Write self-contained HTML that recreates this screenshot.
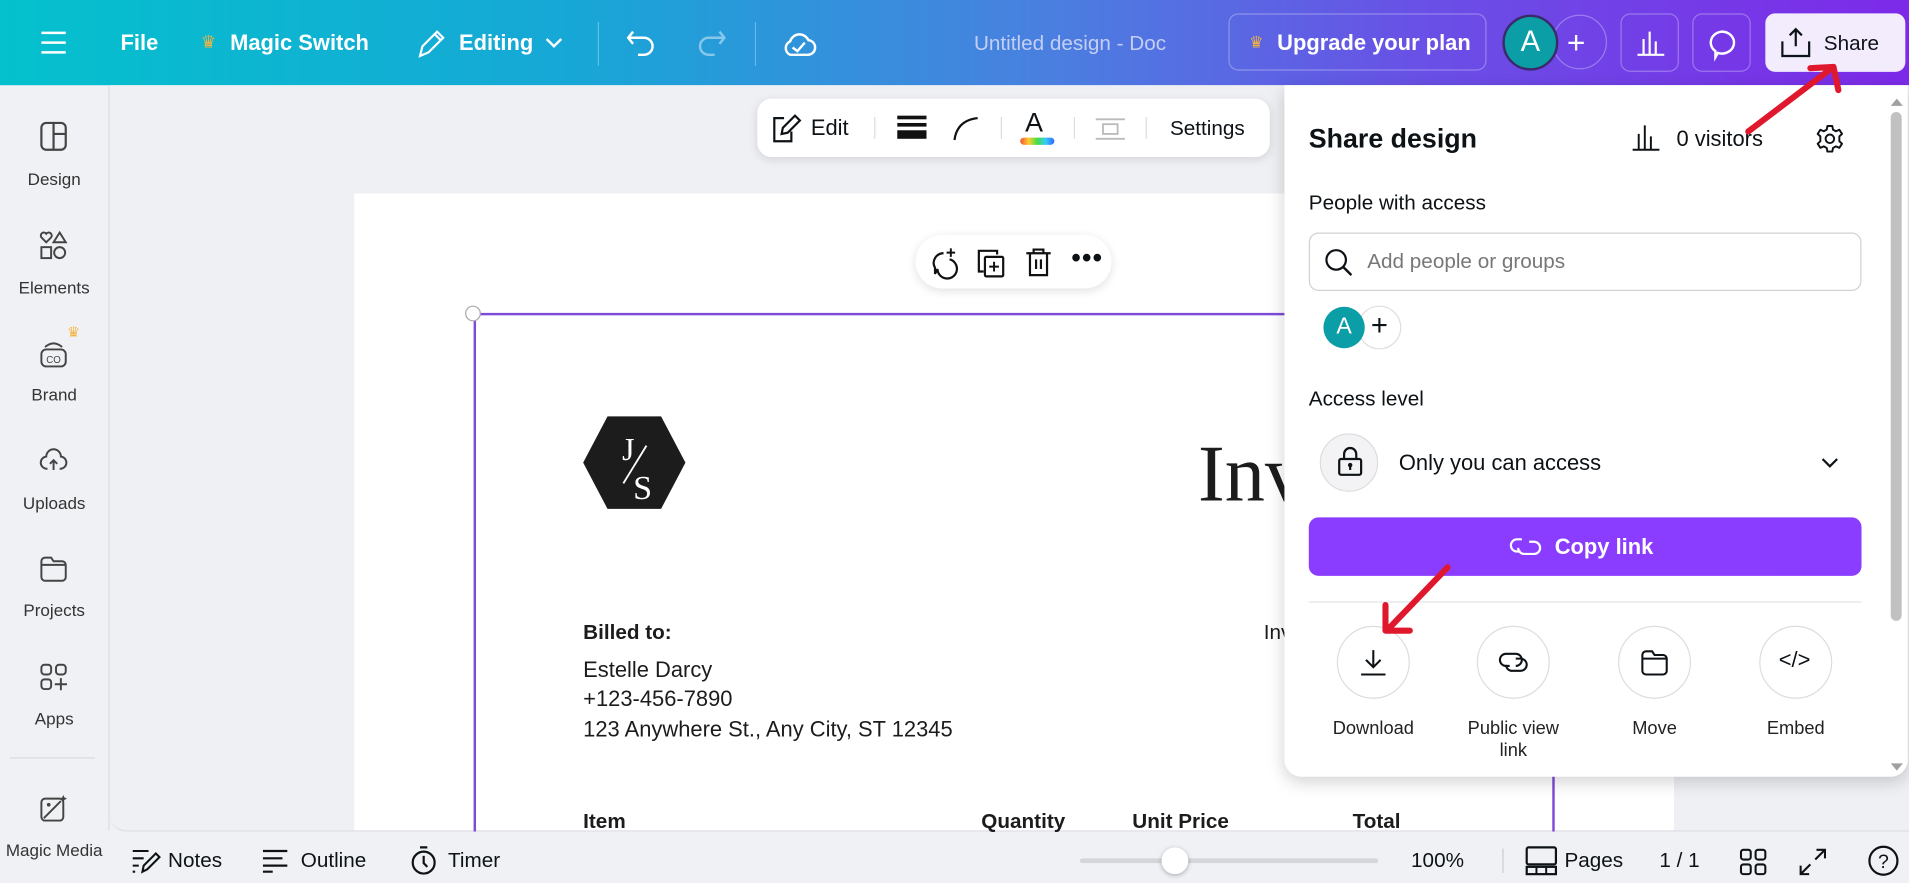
<!DOCTYPE html>
<html><head><meta charset="utf-8"><style>
html,body{margin:0;padding:0;width:1909px;height:883px;overflow:hidden;background:#f0f1f5}
#w{position:absolute;left:0;top:0;width:1568px;height:725px;transform:scale(1.21747);transform-origin:0 0;font-family:"Liberation Sans",sans-serif;color:#0d1216}
.a{position:absolute}
.t{position:absolute;white-space:nowrap}
svg{position:absolute;overflow:visible}
.top{left:0;top:0;width:1568px;height:70px;background:linear-gradient(90deg,#04c1cd 0%,#17a7d6 30%,#4a7fe0 55%,#6a4fe6 75%,#7d2ae8 100%)}
.wt{color:#fff;font-weight:bold;font-size:18px;top:25px}
.sb .t{font-size:14px;color:#333;width:89px;text-align:center;left:0}
.bb{font-size:17px;top:697px;color:#0d1216}
.lbl{font-size:15px;color:#222;text-align:center;width:110px}
</style></head><body><div id="w">
<!-- top bar -->
<div class="a top"></div>
<svg style="left:34px;top:25px" width="20" height="20"><path d="M0 2H20M0 10H20M0 18H20" stroke="#fff" stroke-width="2"/></svg>
<div class="t wt" style="left:99px">File</div>
<div class="t" style="left:165px;top:26px;color:#f5b33e;font-size:14px">♛</div>
<div class="t wt" style="left:189px">Magic Switch</div>
<svg style="left:342px;top:24px" width="24" height="24"><path d="M3 22L5 14L17 2L22 7L10 19Z M15 4L20 9" stroke="#fff" stroke-width="1.8" fill="none"/></svg>
<div class="t wt" style="left:377px">Editing</div>
<svg style="left:448px;top:31px" width="14" height="10"><path d="M1 1L7 7L13 1" stroke="#fff" stroke-width="2" fill="none"/></svg>
<div class="a" style="left:491px;top:18px;width:1px;height:36px;background:rgba(255,255,255,.3)"></div>
<svg style="left:514px;top:24px" width="26" height="24"><path d="M6 2L2 7L6 12M2 7H15A7 7 0 0 1 15 21H10" stroke="#fff" stroke-width="2" fill="none"/></svg>
<svg style="left:571px;top:24px" width="26" height="24"><path d="M20 2L24 7L20 12M24 7H11A7 7 0 0 0 11 21H16" stroke="rgba(255,255,255,.45)" stroke-width="2" fill="none"/></svg>
<div class="a" style="left:620px;top:18px;width:1px;height:36px;background:rgba(255,255,255,.3)"></div>
<svg style="left:642px;top:23px" width="28" height="26"><path d="M7 22A6 6 0 0 1 7 11A8 8 0 0 1 22 10A6 6 0 0 1 21 22Z M9 16L13 19L19 12" stroke="#fff" stroke-width="2" fill="none"/></svg>
<div class="t" style="left:800px;top:26px;font-size:17px;color:#c4cff5">Untitled design - Doc</div>
<div class="a" style="left:1009px;top:11px;width:212px;height:47px;border:1px solid rgba(255,255,255,.3);border-radius:8px;box-sizing:border-box"></div>
<div class="t" style="left:1026px;top:27px;color:#f5b33e;font-size:13px">♛</div>
<div class="t wt" style="left:1049px">Upgrade your plan</div>
<div class="a" style="left:1275px;top:12px;width:45px;height:45px;border:1px solid rgba(255,255,255,.3);border-radius:50%;box-sizing:border-box"></div>
<div class="t" style="left:1287px;top:20px;color:#fff;font-size:26px">+</div>
<div class="a" style="left:1234px;top:12px;width:46px;height:46px;border:2px solid #3a2a6a;background:#0b9ea7;border-radius:50%;box-sizing:border-box;color:#fff;font-size:24px;text-align:center;line-height:42px">A</div>
<div class="a" style="left:1331px;top:11px;width:48px;height:48px;border:1px solid rgba(255,255,255,.3);border-radius:8px;box-sizing:border-box"></div>
<svg style="left:1344px;top:24px" width="24" height="22"><path d="M1 21H23M6 21V8M11 21V2M16 21V10" stroke="#fff" stroke-width="1.8" fill="none"/></svg>
<div class="a" style="left:1390px;top:11px;width:48px;height:48px;border:1px solid rgba(255,255,255,.3);border-radius:8px;box-sizing:border-box"></div>
<svg style="left:1402px;top:24px" width="24" height="24"><path d="M12 2A10 9 0 1 1 9 19.5L7 23L7 18A10 9 0 0 1 12 2Z" stroke="#fff" stroke-width="2" fill="none"/></svg>
<div class="a" style="left:1450px;top:11px;width:115px;height:48px;background:#f2ecfd;border-radius:8px"></div>
<svg style="left:1462px;top:22px" width="26" height="26"><path d="M13 16V2M8 7L13 2L18 7M2 12V24H24V12" stroke="#0d1216" stroke-width="1.8" fill="none"/></svg>
<div class="t" style="left:1498px;top:26px;font-size:17px;color:#0d1216">Share</div>

<!-- sidebar -->
<div class="a" style="left:89px;top:70px;width:1px;height:612px;background:#dcdde2"></div>
<div class="sb">
<svg style="left:33px;top:100px" width="22" height="24"><rect x="1" y="1" width="20" height="22" rx="4" stroke="#444" stroke-width="1.8" fill="none"/><path d="M11 1V23M11 10H21" stroke="#444" stroke-width="1.8"/></svg>
<div class="t" style="top:139px">Design</div>
<svg style="left:33px;top:190px" width="22" height="24"><path d="M5 9L1 5A2.5 2.5 0 0 1 5 2A2.5 2.5 0 0 1 9 5Z M16 1L21 9H11Z" stroke="#444" stroke-width="1.6" fill="none"/><rect x="1" y="13" width="8" height="9" stroke="#444" stroke-width="1.6" fill="none"/><circle cx="16" cy="17.5" r="4.5" stroke="#444" stroke-width="1.6" fill="none"/></svg>
<div class="t" style="top:228px">Elements</div>
<svg style="left:33px;top:280px" width="22" height="22"><rect x="1" y="7" width="20" height="14" rx="4" stroke="#444" stroke-width="1.6" fill="none"/><path d="M4 5Q11 -1 18 5" stroke="#444" stroke-width="1.6" fill="none"/><text x="11" y="18" font-size="8" text-anchor="middle" fill="#444" font-family="Liberation Sans">CO</text></svg>
<div class="t" style="left:55px!important;top:266px;color:#f5b33e;font-size:12px;width:auto">♛</div>
<div class="t" style="top:316px">Brand</div>
<svg style="left:32px;top:366px" width="24" height="22"><path d="M7 19A5 5 0 0 1 6 9A6 6 0 0 1 18 9A5 5 0 0 1 17 19M12 20V12M9 15L12 12L15 15" stroke="#444" stroke-width="1.6" fill="none"/></svg>
<div class="t" style="top:405px">Uploads</div>
<svg style="left:33px;top:456px" width="22" height="22"><path d="M1 5A3 3 0 0 1 4 2H9L11 5H18A3 3 0 0 1 21 8V18A3 3 0 0 1 18 21H4A3 3 0 0 1 1 18Z M1 8H21" stroke="#444" stroke-width="1.6" fill="none"/></svg>
<div class="t" style="top:493px">Projects</div>
<svg style="left:33px;top:545px" width="22" height="22"><rect x="1" y="1" width="8" height="8" rx="2.5" stroke="#444" stroke-width="1.6" fill="none"/><rect x="13" y="1" width="8" height="8" rx="2.5" stroke="#444" stroke-width="1.6" fill="none"/><rect x="1" y="13" width="8" height="8" rx="2.5" stroke="#444" stroke-width="1.6" fill="none"/><path d="M17 12V22M12 17H22" stroke="#444" stroke-width="1.6"/></svg>
<div class="t" style="top:582px">Apps</div>
<div class="a" style="left:8px;top:622px;width:70px;height:1px;background:#d8d9de"></div>
<svg style="left:33px;top:653px" width="22" height="22"><rect x="1" y="3" width="18" height="18" rx="3" stroke="#444" stroke-width="1.6" fill="none"/><path d="M3 19L17 5" stroke="#444" stroke-width="1.6"/><circle cx="7" cy="8" r="1.5" fill="#444"/><path d="M19 0L20 2L22 3L20 4L19 6L18 4L16 3L18 2Z" fill="#444"/></svg>
<div class="t" style="top:690px">Magic Media</div>
</div>

<!-- canvas -->
<div class="a" style="left:90px;top:70px;width:1478px;height:612px;background:#eef0f4;border-bottom-left-radius:14px;border-bottom:1px solid #dcdde2"></div>
<div class="a" style="left:291px;top:159px;width:1084px;height:523px;background:#fff"></div>
<!-- selection -->
<div class="a" style="left:389px;top:257px;width:888px;height:426px;border:2px solid #8b3dff;border-bottom:none;box-sizing:border-box;border-color:#7d4bd8"></div>
<div class="a" style="left:382px;top:251px;width:13px;height:13px;border-radius:50%;background:#fff;border:1px solid #aaa;box-sizing:border-box"></div>
<!-- floating toolbar -->
<div class="a" style="left:622px;top:81px;width:421px;height:48px;background:#fff;border-radius:12px;box-shadow:0 2px 8px rgba(0,0,0,.12)"></div>
<svg style="left:634px;top:93px" width="26" height="24"><path d="M10 4H2V23H16V15 M8 17L9 12L19 2L23 6L13 16Z" stroke="#0d1216" stroke-width="1.8" fill="none"/></svg>
<div class="t" style="left:666px;top:95px;font-size:18px">Edit</div>
<div class="a" style="left:718px;top:96px;width:1px;height:18px;background:#ddd"></div>
<div class="a" style="left:737px;top:95px;width:24px;height:3px;background:#111"></div>
<div class="a" style="left:737px;top:101px;width:24px;height:3px;background:#111"></div>
<div class="a" style="left:737px;top:107px;width:24px;height:7px;background:#111"></div>
<svg style="left:783px;top:95px" width="22" height="20"><path d="M1 20Q3 4 20 2" stroke="#111" stroke-width="1.8" fill="none"/></svg>
<div class="a" style="left:822px;top:96px;width:1px;height:18px;background:#ddd"></div>
<div class="t" style="left:842px;top:88px;font-size:22px">A</div>
<div class="a" style="left:838px;top:113px;width:28px;height:6px;border-radius:3px;background:linear-gradient(90deg,#e53,#fc3,#4d4,#3cf,#36f)"></div>
<div class="a" style="left:882px;top:96px;width:1px;height:18px;background:#ddd"></div>
<svg style="left:900px;top:97px" width="24" height="18"><path d="M0 1H24M0 17H24" stroke="#bbb" stroke-width="1.5"/><rect x="6" y="5" width="12" height="8" stroke="#bbb" stroke-width="1.5" fill="none"/></svg>
<div class="a" style="left:941px;top:96px;width:1px;height:18px;background:#ddd"></div>
<div class="t" style="left:961px;top:96px;font-size:17px">Settings</div>
<!-- mini toolbar -->
<div class="a" style="left:752px;top:193px;width:161px;height:44px;background:#fff;border-radius:22px;box-shadow:0 2px 8px rgba(0,0,0,.12)"></div>
<svg style="left:762px;top:203px" width="24" height="26"><path d="M18 10A8 8 0 1 1 8 18L6 22L6 17A8 8 0 0 1 13 5" stroke="#111" stroke-width="1.8" fill="none"/><path d="M19 1V8M15.5 4.5H22.5" stroke="#111" stroke-width="1.6"/></svg>
<svg style="left:802px;top:204px" width="24" height="24"><path d="M6 19H2V2H17V5" stroke="#111" stroke-width="1.8" fill="none"/><rect x="7" y="7" width="15" height="16" rx="1" stroke="#111" stroke-width="1.8" fill="none"/><path d="M14.5 11V19M10.5 15H18.5" stroke="#111" stroke-width="1.6"/></svg>
<svg style="left:842px;top:203px" width="22" height="24"><path d="M1 5H21M7 5V2H15V5M4 5V23H18V5M9 10V18M13 10V18" stroke="#111" stroke-width="1.8" fill="none"/></svg>
<div class="t" style="left:880px;top:199px;font-size:22px;font-weight:bold;letter-spacing:1px">•••</div>

<!-- document -->
<svg style="left:479px;top:342px" width="84" height="76"><path d="M20 0H64L84 38L64 76H20L0 38Z" fill="#1c1c1c" stroke-linejoin="round"/><text x="32" y="36" fill="#fff" font-family="Liberation Serif" font-size="26">J</text><path d="M33 55L52 24" stroke="#fff" stroke-width="1.5"/><text x="41" y="68" fill="#fff" font-family="Liberation Serif" font-size="28">S</text></svg>
<div class="t" style="left:984px;top:352px;font-family:'Liberation Serif',serif;font-size:66px;color:#1c1c1c">Inv</div>
<div class="t" style="left:479px;top:510px;font-size:17px;font-weight:bold;color:#1c1c1c">Billed to:</div>
<div class="t" style="left:479px;top:540px;font-size:18px;color:#1c1c1c">Estelle Darcy</div>
<div class="t" style="left:479px;top:564px;font-size:18px;color:#1c1c1c">+123-456-7890</div>
<div class="t" style="left:479px;top:589px;font-size:18px;color:#1c1c1c">123 Anywhere St., Any City, ST 12345</div>
<div class="t" style="left:1038px;top:510px;font-size:17px;color:#1c1c1c">Inv</div>
<div class="t" style="left:479px;top:665px;font-size:17px;font-weight:bold;color:#1c1c1c">Item</div>
<div class="t" style="left:806px;top:665px;font-size:17px;font-weight:bold;color:#1c1c1c">Quantity</div>
<div class="t" style="left:930px;top:665px;font-size:17px;font-weight:bold;color:#1c1c1c">Unit Price</div>
<div class="t" style="left:1111px;top:665px;font-size:17px;font-weight:bold;color:#1c1c1c">Total</div>

<!-- share panel -->
<div class="a" style="left:1055px;top:70px;width:512px;height:568px;background:#fff;border-radius:0 0 14px 14px;box-shadow:0 4px 14px rgba(0,0,0,.18)"></div>
<div class="a" style="left:1553px;top:92px;width:9px;height:418px;background:#c1c1c1;border-radius:5px"></div>
<svg style="left:1552px;top:80px" width="12" height="8"><path d="M1 7L6 1L11 7Z" fill="#a0a0a0"/></svg>
<svg style="left:1552px;top:626px" width="12" height="8"><path d="M1 1L6 7L11 1Z" fill="#a0a0a0"/></svg>
<div class="t" style="left:1075px;top:101px;font-size:22px;font-weight:bold">Share design</div>
<svg style="left:1340px;top:102px" width="24" height="22"><path d="M1 21H23M6 21V8M11 21V1M16 21V10" stroke="#0d1216" stroke-width="1.6" fill="none"/></svg>
<div class="t" style="left:1377px;top:104px;font-size:18px">0 visitors</div>
<svg style="left:1491px;top:102px" width="24" height="24"><circle cx="12" cy="12" r="3.5" stroke="#0d1216" stroke-width="1.6" fill="none"/><path d="M10 1.5H14L14.6 4.5L17 5.8L19.8 4.6L22 8L19.8 10V14L22 16L19.8 19.4L17 18.2L14.6 19.5L14 22.5H10L9.4 19.5L7 18.2L4.2 19.4L2 16L4.2 14V10L2 8L4.2 4.6L7 5.8L9.4 4.5Z" stroke="#0d1216" stroke-width="1.6" fill="none" stroke-linejoin="round"/></svg>
<div class="t" style="left:1075px;top:157px;font-size:17px">People with access</div>
<div class="a" style="left:1075px;top:191px;width:454px;height:48px;border:1px solid #cfd1d5;border-radius:8px;box-sizing:border-box"></div>
<svg style="left:1088px;top:204px" width="24" height="24"><circle cx="9.5" cy="9.5" r="8" stroke="#0d1216" stroke-width="1.8" fill="none"/><path d="M15 15L22 22" stroke="#0d1216" stroke-width="2"/></svg>
<div class="t" style="left:1123px;top:205px;font-size:17px;color:#777">Add people or groups</div>
<div class="a" style="left:1115px;top:251px;width:36px;height:36px;border:1px solid #ddd;border-radius:50%;box-sizing:border-box;background:#fff;text-align:center;line-height:32px;font-size:24px">+</div>
<div class="a" style="left:1087px;top:252px;width:34px;height:34px;background:#0b9ea7;border-radius:50%;color:#fff;text-align:center;line-height:34px;font-size:19px">A</div>
<div class="t" style="left:1075px;top:318px;font-size:17px">Access level</div>
<div class="a" style="left:1084px;top:356px;width:48px;height:48px;border:1px solid #ddd;border-radius:50%;box-sizing:border-box;background:#f3f3f5"></div>
<svg style="left:1099px;top:367px" width="20" height="24"><path d="M5 10V6A5 5 0 0 1 15 6V10" stroke="#0d1216" stroke-width="1.8" fill="none"/><rect x="1" y="10" width="18" height="13" rx="1.5" stroke="#0d1216" stroke-width="1.8" fill="none"/><circle cx="10" cy="15" r="1.8" fill="#0d1216"/><path d="M10 16V19" stroke="#0d1216" stroke-width="1.8"/></svg>
<div class="t" style="left:1149px;top:370px;font-size:18px">Only you can access</div>
<svg style="left:1496px;top:376px" width="14" height="9"><path d="M1 1L7 7L13 1" stroke="#0d1216" stroke-width="1.8" fill="none"/></svg>
<div class="a" style="left:1075px;top:425px;width:454px;height:48px;background:#8b3dff;border-radius:8px"></div>
<svg style="left:1239px;top:440px" width="28" height="18"><path d="M11 3H7A5 5 0 0 0 7 13H10M17 5H21A5 5 0 0 1 21 15H13A5 5 0 0 1 8 10" stroke="#fff" stroke-width="1.8" fill="none"/></svg>
<div class="t" style="left:1277px;top:439px;font-size:18px;color:#fff;font-weight:bold">Copy link</div>
<div class="a" style="left:1075px;top:494px;width:454px;height:1px;background:#e2e3e6"></div>
<div class="a" style="left:1098px;top:514px;width:60px;height:60px;border:1px solid #ddd;border-radius:50%;box-sizing:border-box"></div>
<div class="a" style="left:1213px;top:514px;width:60px;height:60px;border:1px solid #ddd;border-radius:50%;box-sizing:border-box"></div>
<div class="a" style="left:1329px;top:514px;width:60px;height:60px;border:1px solid #ddd;border-radius:50%;box-sizing:border-box"></div>
<div class="a" style="left:1445px;top:514px;width:60px;height:60px;border:1px solid #ddd;border-radius:50%;box-sizing:border-box"></div>
<svg style="left:1117px;top:533px" width="22" height="22"><path d="M11 1V15M5 9L11 15L17 9M1 21H21" stroke="#0d1216" stroke-width="1.7" fill="none"/></svg>
<svg style="left:1230px;top:534px" width="26" height="20"><path d="M11 3H7A5 5 0 0 0 7 13H10M15 7H19A5 5 0 0 1 19 17H11A5 5 0 0 1 7 12M11 3H15A5 5 0 0 1 15 13" stroke="#0d1216" stroke-width="1.7" fill="none"/></svg>
<svg style="left:1348px;top:533px" width="22" height="22"><path d="M1 5A3 3 0 0 1 4 2H9L11 5H18A3 3 0 0 1 21 8V18A3 3 0 0 1 18 21H4A3 3 0 0 1 1 18Z M1 8H21" stroke="#0d1216" stroke-width="1.7" fill="none"/></svg>
<div class="t" style="left:1461px;top:532px;font-size:18px">&lt;/&gt;</div>
<div class="t lbl" style="left:1073px;top:590px">Download</div>
<div class="t lbl" style="left:1188px;top:590px;line-height:18px">Public view<br>link</div>
<div class="t lbl" style="left:1304px;top:590px">Move</div>
<div class="t lbl" style="left:1420px;top:590px">Embed</div>

<!-- red arrows -->
<svg style="left:0;top:0" width="1568" height="725"><path d="M1436 108L1502 58M1487 56L1506 55L1510 74" stroke="#e0182d" stroke-width="5" fill="none" stroke-linecap="round" stroke-linejoin="round"/><path d="M1189 466L1140 517M1138 497L1138 518L1158 518" stroke="#e0182d" stroke-width="5" fill="none" stroke-linecap="round" stroke-linejoin="round"/></svg>

<!-- bottom bar -->
<svg style="left:108px;top:697px" width="24" height="20"><path d="M1 2H14M1 8H10M1 14H6M1 19H3M9 19L10 14L20 4L23 7L13 17Z" stroke="#0d1216" stroke-width="1.7" fill="none"/></svg>
<div class="t bb" style="left:138px">Notes</div>
<svg style="left:216px;top:698px" width="22" height="18"><path d="M0 1H20M0 7H16M0 13H20M0 18H8" stroke="#0d1216" stroke-width="1.8"/></svg>
<div class="t bb" style="left:247px">Outline</div>
<svg style="left:337px;top:695px" width="22" height="24"><circle cx="11" cy="13.5" r="9" stroke="#0d1216" stroke-width="1.8" fill="none"/><path d="M8 1H14M11 8V14L14 17" stroke="#0d1216" stroke-width="1.8" fill="none"/></svg>
<div class="t bb" style="left:368px">Timer</div>
<div class="a" style="left:887px;top:705px;width:245px;height:4px;background:#d5d6da;border-radius:2px"></div>
<div class="a" style="left:954px;top:696px;width:22px;height:22px;border-radius:50%;background:#fff;box-shadow:0 1px 4px rgba(0,0,0,.3)"></div>
<div class="t bb" style="left:1159px">100%</div>
<div class="a" style="left:1234px;top:697px;width:1px;height:20px;background:#ccc"></div>
<svg style="left:1253px;top:695px" width="26" height="24"><rect x="1" y="1" width="24" height="14" rx="1.5" stroke="#0d1216" stroke-width="1.8" fill="none"/><rect x="1" y="17" width="24" height="6" stroke="#0d1216" stroke-width="1.8" fill="none"/><path d="M9 17V23M17 17V23" stroke="#0d1216" stroke-width="1.6"/></svg>
<div class="t bb" style="left:1285px">Pages</div>
<div class="t bb" style="left:1363px">1 / 1</div>
<svg style="left:1429px;top:697px" width="22" height="22"><rect x="1" y="1" width="8" height="8" rx="2" stroke="#0d1216" stroke-width="1.7" fill="none"/><rect x="13" y="1" width="8" height="8" rx="2" stroke="#0d1216" stroke-width="1.7" fill="none"/><rect x="1" y="13" width="8" height="8" rx="2" stroke="#0d1216" stroke-width="1.7" fill="none"/><rect x="13" y="13" width="8" height="8" rx="2" stroke="#0d1216" stroke-width="1.7" fill="none"/></svg>
<svg style="left:1478px;top:697px" width="22" height="22"><path d="M13 9L21 1M14 1H21V8M9 13L1 21M1 14V21H8" stroke="#0d1216" stroke-width="1.7" fill="none"/></svg>
<svg style="left:1534px;top:694px" width="26" height="26"><circle cx="13" cy="13" r="11.5" stroke="#0d1216" stroke-width="1.8" fill="none"/><text x="13" y="19" font-size="16" text-anchor="middle" font-family="Liberation Sans" fill="#0d1216">?</text></svg>
</div></body></html>
